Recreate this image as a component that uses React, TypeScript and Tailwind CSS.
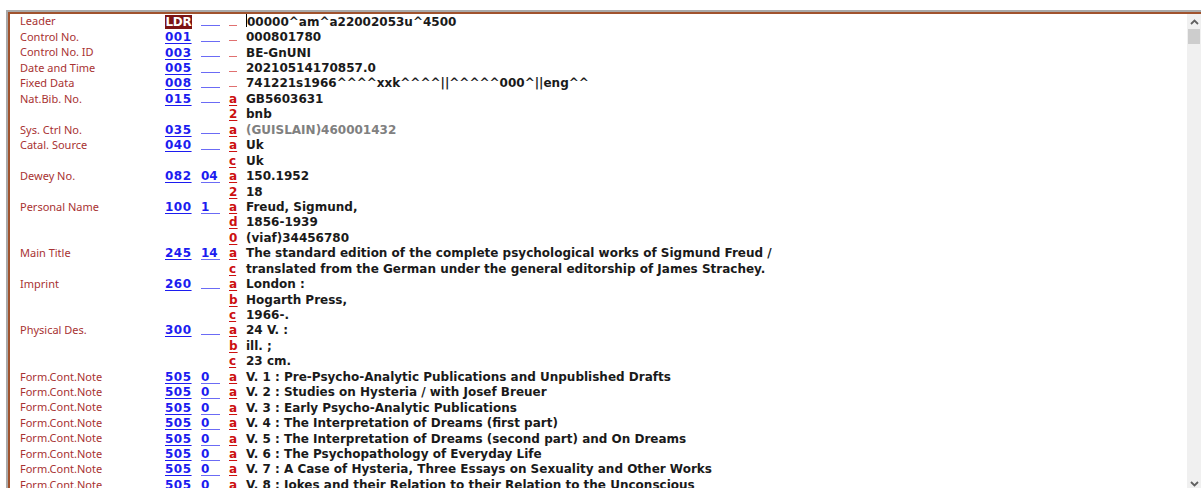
import React from "react";

type Row = {
  label?: string;
  tag?: string;
  ind?: string;
  code: string;
  text: string;
  muted?: boolean;
};

const rows: Row[] = [
  { label: "Leader", tag: "LDR", ind: "", code: "_", text: "00000^am^a22002053u^4500" },
  { label: "Control No.", tag: "001", ind: "", code: "_", text: "000801780" },
  { label: "Control No. ID", tag: "003", ind: "", code: "_", text: "BE-GnUNI" },
  { label: "Date and Time", tag: "005", ind: "", code: "_", text: "20210514170857.0" },
  { label: "Fixed Data", tag: "008", ind: "", code: "_", text: "741221s1966^^^^xxk^^^^||^^^^^000^||eng^^" },
  { label: "Nat.Bib. No.", tag: "015", ind: "", code: "a", text: "GB5603631" },
  { code: "2", text: "bnb" },
  { label: "Sys. Ctrl No.", tag: "035", ind: "", code: "a", text: "(GUISLAIN)460001432", muted: true },
  { label: "Catal. Source", tag: "040", ind: "", code: "a", text: "Uk" },
  { code: "c", text: "Uk" },
  { label: "Dewey No.", tag: "082", ind: "04", code: "a", text: "150.1952" },
  { code: "2", text: "18" },
  { label: "Personal Name", tag: "100", ind: "1", code: "a", text: "Freud, Sigmund," },
  { code: "d", text: "1856-1939" },
  { code: "0", text: "(viaf)34456780" },
  { label: "Main Title", tag: "245", ind: "14", code: "a", text: "The standard edition of the complete psychological works of Sigmund Freud /" },
  { code: "c", text: "translated from the German under the general editorship of James Strachey." },
  { label: "Imprint", tag: "260", ind: "", code: "a", text: "London :" },
  { code: "b", text: "Hogarth Press," },
  { code: "c", text: "1966-." },
  { label: "Physical Des.", tag: "300", ind: "", code: "a", text: "24 V. :" },
  { code: "b", text: "ill. ;" },
  { code: "c", text: "23 cm." },
  { label: "Form.Cont.Note", tag: "505", ind: "0", code: "a", text: "V. 1 : Pre-Psycho-Analytic Publications and Unpublished Drafts" },
  { label: "Form.Cont.Note", tag: "505", ind: "0", code: "a", text: "V. 2 : Studies on Hysteria / with Josef Breuer" },
  { label: "Form.Cont.Note", tag: "505", ind: "0", code: "a", text: "V. 3 : Early Psycho-Analytic Publications" },
  { label: "Form.Cont.Note", tag: "505", ind: "0", code: "a", text: "V. 4 : The Interpretation of Dreams (first part)" },
  { label: "Form.Cont.Note", tag: "505", ind: "0", code: "a", text: "V. 5 : The Interpretation of Dreams (second part) and On Dreams" },
  { label: "Form.Cont.Note", tag: "505", ind: "0", code: "a", text: "V. 6 : The Psychopathology of Everyday Life" },
  { label: "Form.Cont.Note", tag: "505", ind: "0", code: "a", text: "V. 7 : A Case of Hysteria, Three Essays on Sexuality and Other Works" },
  { label: "Form.Cont.Note", tag: "505", ind: "0", code: "a", text: "V. 8 : Jokes and their Relation to their Relation to the Unconscious" },
];

function Tag({ tag }: { tag?: string }) {
  if (!tag) return <span className="w-[36px] shrink-0" />;
  if (tag === "LDR")
    return (
      <span className="w-[36px] shrink-0">
        <span className="inline-block w-[27px] bg-[#7c1414] text-center leading-[14px] tracking-[-0.3px] text-white">LDR</span>
      </span>
    );
  return (
    <span className="w-[36px] shrink-0">
      <span className="tracking-[0.5px] text-[#1c1cf0] underline decoration-[#1c1cf0] underline-offset-2">{tag}</span>
    </span>
  );
}

function Ind({ row }: { row: Row }) {
  if (!row.tag) return <span className="w-[27px] shrink-0" />;
  return (
    <span className="w-[27px] shrink-0">
      <span className="inline-block h-[14px] w-[19px] border-b border-[#6b6bf5] leading-[14px] text-[#1c1cf0]">
        {row.ind}
      </span>
    </span>
  );
}

function Code({ code }: { code: string }) {
  if (code === "_")
    return (
      <span className="w-[18px] shrink-0 pl-[1px]">
        <span className="inline-block h-[13px] w-[8px] border-b border-[#e07070]" />
      </span>
    );
  return (
    <span className="w-[18px] shrink-0 pl-[1px]">
      <span className="text-[#cc1010] underline decoration-[#cc1010] underline-offset-2">{code}</span>
    </span>
  );
}

export default function App() {
  return (
    <div className="h-[488px] w-[1201px] overflow-hidden bg-white pt-[10px] pl-[6px]">
      <div className="flex h-[478px] border-t-2 border-l-2 border-[#a9a9a9]">
        <div className="flex flex-1 border-t-2 border-l-2 border-[#a0522d]">
          <div className="flex-1 overflow-hidden">
            {rows.map((r, i) => (
              <div key={i} className="flex h-[15.45px] items-center whitespace-nowrap">
                <span className="w-[155px] shrink-0 pl-[10px] font-['Noto_Sans',sans-serif] text-[11px] text-[#a83232]">
                  {r.label ?? ""}
                </span>
                <div className="flex items-center font-['DejaVu_Sans',sans-serif] text-[12px] font-bold">
                  <Tag tag={r.tag} />
                  <Ind row={r} />
                  <Code code={r.code} />
                  <span className={r.muted ? "text-[#808080]" : "text-[#1a1a1a]"}>
                    {i === 0 && <span className="inline-block h-[13px] w-px translate-y-[1px] bg-black align-top" />}
                    {r.text}
                  </span>
                </div>
              </div>
            ))}
          </div>
          {/* scrollbar */}
          <div className="flex w-[14px] flex-col items-center bg-[#f0f0f0]">
            <svg width="9" height="6" viewBox="0 0 9 6" className="mt-[5px]">
              <path d="M1 5 L4.5 1.5 L8 5" fill="none" stroke="#606060" strokeWidth="1.8" />
            </svg>
            <div className="mt-[4px] h-[15px] w-[12px] bg-[#cdcdcd]" />
            <div className="flex-1" />
            <svg width="9" height="6" viewBox="0 0 9 6" className="mb-[1px]">
              <path d="M1 1 L4.5 4.5 L8 1" fill="none" stroke="#606060" strokeWidth="1.8" />
            </svg>
          </div>
        </div>
      </div>
    </div>
  );
}
